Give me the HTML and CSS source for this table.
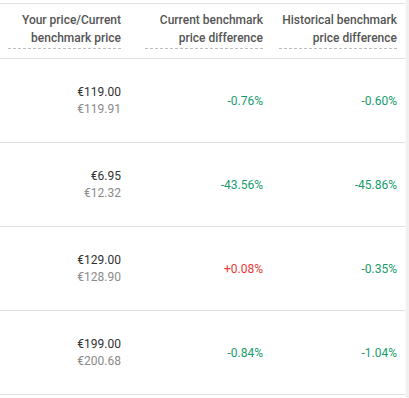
FILE: index.html
```html
<!DOCTYPE html>
<html>
<head>
<meta charset="utf-8">
<link rel="stylesheet" href="styles.css">
</head>
<body>
<div class="page">
  <div class="table">
    <div class="row head">
      <div class="cell"><span class="label">Your price/Current benchmark price</span></div>
      <div class="cell"><span class="label">Current benchmark price difference</span></div>
      <div class="cell"><span class="label">Historical benchmark price difference</span></div>
    </div>
    <div class="row">
      <div class="cell prices"><span class="own">€119.00</span><span class="bench">€119.91</span></div>
      <div class="cell neg">-0.76%</div>
      <div class="cell neg">-0.60%</div>
    </div>
    <div class="row">
      <div class="cell prices"><span class="own">€6.95</span><span class="bench">€12.32</span></div>
      <div class="cell neg">-43.56%</div>
      <div class="cell neg">-45.86%</div>
    </div>
    <div class="row">
      <div class="cell prices"><span class="own">€129.00</span><span class="bench">€128.90</span></div>
      <div class="cell pos">+0.08%</div>
      <div class="cell neg">-0.35%</div>
    </div>
    <div class="row">
      <div class="cell prices"><span class="own">€199.00</span><span class="bench">€200.68</span></div>
      <div class="cell neg">-0.84%</div>
      <div class="cell neg">-1.04%</div>
    </div>
  </div>
  <div class="scroll"></div>
</div>
</body>
</html>
```
FILE: styles.css
```css
html, body {
  margin: 0;
  padding: 0;
  background: #ffffff;
}
body {
  font-family: Roboto, "Liberation Sans", sans-serif;
  font-size: 12px;
  color: #333333;
}
.page {
  display: flex;
  width: 409px;
  height: 398px;
  overflow: hidden;
}
.table {
  width: 405px;
  padding-top: 3px;
}
.scroll {
  width: 4px;
  background: #f1f1f1;
  border-left: 1px solid #fafafa;
}
.row {
  display: grid;
  grid-template-columns: 129px 142px 134px;
  height: 84px;
  box-sizing: border-box;
  border-bottom: 1px solid #e0e0e0;
  align-items: center;
}
.row.head {
  height: 56px;
  border-top: 1px solid #e0e0e0;
  align-items: start;
}
.cell {
  padding: 0 8px;
  text-align: right;
}
.head .cell {
  padding-top: 7px;
  display: flex;
  justify-content: flex-end;
}
.label {
  display: block;
  width: 118px;
  line-height: 18px;
  color: #555555;
  font-weight: 500;
  border-bottom: 1px dashed #bdbdbd;
  padding-bottom: 1px;
}
.prices {
  display: flex;
  flex-direction: column;
  align-items: flex-end;
  line-height: 17px;
}
.own {
  color: #333333;
}
.bench {
  color: #8a8a8a;
}
.neg {
  color: #169c6c;
}
.pos {
  color: #e53935;
}
```
